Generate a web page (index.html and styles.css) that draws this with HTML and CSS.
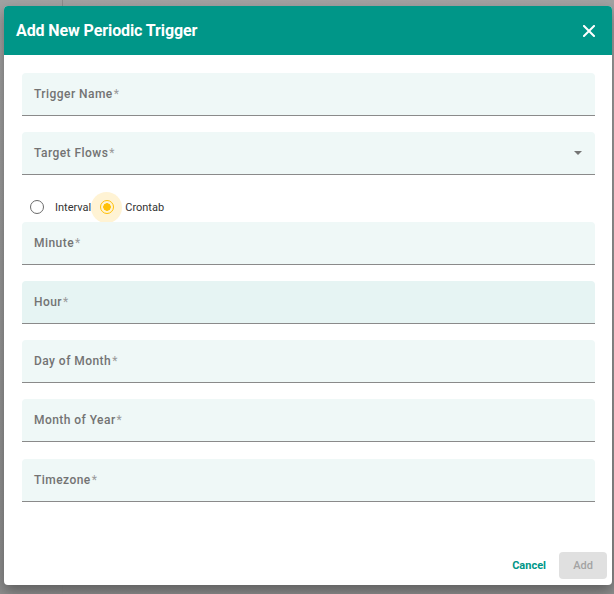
FILE: index.html
```html
<!DOCTYPE html>
<html>
<head>
<meta charset="utf-8">
<link rel="stylesheet" href="styles.css">
</head>
<body>
<div class="dialog">
  <div class="header">
    <div class="title">Add New Periodic Trigger</div>
    <svg class="close" width="12" height="12" viewBox="0 0 12 12"><path d="M1 1L11 11M11 1L1 11" stroke="#fff" stroke-width="2" stroke-linecap="square"/></svg>
  </div>
  <div class="body">
    <div class="field"><span class="label">Trigger Name<span class="req">*</span></span></div>
    <div class="field select"><span class="label">Target Flows<span class="req">*</span></span><span class="arrow"></span></div>
    <div class="radios">
      <label class="radio"><span class="dot"></span><span class="rtext">Interval</span></label>
      <label class="radio on"><span class="halo"><span class="dot"></span></span><span class="rtext">Crontab</span></label>
    </div>
    <div class="field"><span class="label">Minute<span class="req">*</span></span></div>
    <div class="field hover"><span class="label">Hour<span class="req">*</span></span></div>
    <div class="field"><span class="label">Day of Month<span class="req">*</span></span></div>
    <div class="field"><span class="label">Month of Year<span class="req">*</span></span></div>
    <div class="field last"><span class="label">Timezone<span class="req">*</span></span></div>
  </div>
  <div class="footer">
    <span class="cancel">Cancel</span>
    <span class="add">Add</span>
  </div>
</div>
</body>
</html>
```
FILE: styles.css
```css
html, body { margin: 0; padding: 0; }
body {
  width: 614px;
  height: 594px;
  overflow: hidden;
  font-family: Roboto, "Liberation Sans", sans-serif;
  background:
    linear-gradient(to right, transparent 62px, #8c8c8c 62px, #8c8c8c 63px, transparent 63px),
    linear-gradient(to bottom, #a2a2a2, #8e8e8e);
}
.dialog {
  margin: 6px 0 0 4px;
  width: 608px;
  height: 579px;
  background: #fff;
  border-radius: 4px;
  box-shadow: 0 6px 14px rgba(0,0,0,0.35);
  display: flex;
  flex-direction: column;
  overflow: hidden;
}
.header {
  height: 49px;
  background: #009688;
  display: flex;
  align-items: center;
  justify-content: space-between;
  padding: 0 17px 0 12px;
  flex: none;
}
.title {
  color: #fff;
  font-size: 16px;
  font-weight: 700;
  letter-spacing: -0.1px;
}
.close { display: block; }
.body {
  padding: 18px 17px 0 18px;
  display: flex;
  flex-direction: column;
  gap: 16px;
  flex: 1;
}
.field {
  height: 42px;
  background: #eff8f7;
  border-bottom: 1px solid #8a8a8a;
  border-radius: 4px 4px 0 0;
  display: flex;
  align-items: center;
  justify-content: space-between;
  padding: 0 12px;
  flex: none;
}
.field.hover { background: #e6f4f3; }
.field.last { margin-top: 1px; }
.label {
  font-size: 12px;
  font-weight: 500;
  color: #737373;
  letter-spacing: 0.45px;
}
.req {
  color: #9a9a9a;
  font-weight: 400;
  margin-left: 1px;
}
.arrow {
  width: 0;
  height: 0;
  border-left: 4px solid transparent;
  border-right: 4px solid transparent;
  border-top: 4px solid #757575;
  margin-right: 1px;
}
.radios {
  height: 30px;
  margin: 1px 0 -16px 0;
  display: flex;
  align-items: center;
  padding-left: 8px;
}
.radio {
  display: flex;
  align-items: center;
  font-size: 11px;
  color: #333;
}
.radio .dot {
  width: 12px;
  height: 12px;
  border: 1.5px solid #6b6b6b;
  border-radius: 50%;
  box-sizing: content-box;
  display: block;
}
.radio .rtext { margin-left: 11px; }
.radio.on .halo {
  width: 31px;
  height: 31px;
  border-radius: 50%;
  background: #fff3d4;
  display: flex;
  align-items: center;
  justify-content: center;
}
.radio.on .dot {
  border-color: #ffc107;
  background: radial-gradient(circle, #ffc107 0 3.5px, transparent 4px);
}
.radio.on { margin-left: 0; }
.radio.on .rtext { margin-left: 3px; }
.footer {
  display: flex;
  justify-content: flex-end;
  align-items: center;
  gap: 13px;
  padding: 0 5px 6px 0;
  flex: none;
}
.cancel {
  color: #009688;
  font-size: 11px;
  font-weight: 700;
}
.add {
  width: 48px;
  height: 27px;
  background: #e0e0e0;
  color: #a3a3a3;
  font-size: 11px;
  font-weight: 500;
  border-radius: 4px;
  display: flex;
  align-items: center;
  justify-content: center;
}
```
